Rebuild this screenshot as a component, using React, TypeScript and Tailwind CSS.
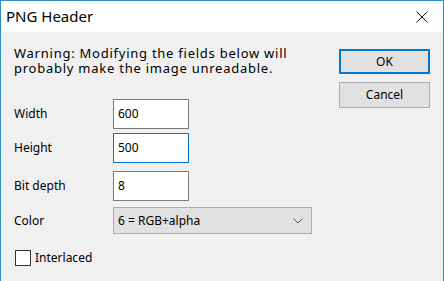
import React from "react";

export default function App() {
  const font = { fontFamily: '"Noto Sans", "Open Sans", sans-serif' };
  return (
    <div
      className="w-[444px] h-[281px] border-t border-l border-r border-[#2a8cc0] bg-[#f0f0f0] flex flex-col overflow-hidden text-black"
      style={font}
    >
      <div className="h-[31px] bg-white flex items-center justify-between pl-[5px] pr-[15px] shrink-0">
        <span className="text-[15px] leading-none">PNG Header</span>
        <svg width="12" height="12" viewBox="0 0 12 12">
          <path d="M0.5 0.5 L11.5 11.5 M11.5 0.5 L0.5 11.5" stroke="#111" strokeWidth="1" />
        </svg>
      </div>
      <div className="flex flex-1">
        <div className="flex flex-col pl-[13px] pt-[14px] w-[325px]">
          <div className="text-[13px] leading-[15px] tracking-[0.75px] whitespace-nowrap">
            <div>Warning: Modifying the fields below will</div>
            <div>probably make the image unreadable.</div>
          </div>
          <div className="flex items-center mt-[23px]">
            <span className="w-[99px] text-[12px]">Width</span>
            <div className="w-[76px] h-[30px] bg-white border border-[#7a7a7a] flex items-center pl-[4px] text-[12px]">600</div>
          </div>
          <div className="flex items-center mt-[4px]">
            <span className="w-[99px] text-[12px]">Height</span>
            <div className="w-[76px] h-[30px] bg-white border border-[#0078d7] flex items-center pl-[4px] text-[12px]">500</div>
          </div>
          <div className="flex items-center mt-[8px]">
            <span className="w-[99px] text-[12px]">Bit depth</span>
            <div className="w-[76px] h-[30px] bg-white border border-[#7a7a7a] flex items-center pl-[4px] text-[12px]">8</div>
          </div>
          <div className="flex items-center mt-[6px]">
            <span className="w-[99px] text-[12px]">Color</span>
            <div className="w-[199px] h-[27px] bg-[#e1e1e1] border border-[#adadad] flex items-center justify-between pl-[4px] pr-[8px] text-[12px]">
              <span>6 = RGB+alpha</span>
              <svg width="10" height="6" viewBox="0 0 10 6">
                <path d="M0.5 0.5 L5 5 L9.5 0.5" stroke="#555" strokeWidth="1" fill="none" />
              </svg>
            </div>
          </div>
          <div className="flex items-center mt-[15px] pl-[1px]">
            <div className="w-[16px] h-[16px] bg-white border border-[#333]" />
            <span className="ml-[4px] text-[12px]">Interlaced</span>
          </div>
        </div>
        <div className="flex flex-col pl-[13px] pt-[17px]">
          <div className="w-[91px] h-[25px] bg-[#e1e1e1] border-2 border-[#0078d7] flex items-center justify-center text-[12px]">OK</div>
          <div className="w-[91px] h-[26px] mt-[8px] bg-[#e1e1e1] border border-[#adadad] flex items-center justify-center text-[12px]">Cancel</div>
        </div>
      </div>
    </div>
  );
}
